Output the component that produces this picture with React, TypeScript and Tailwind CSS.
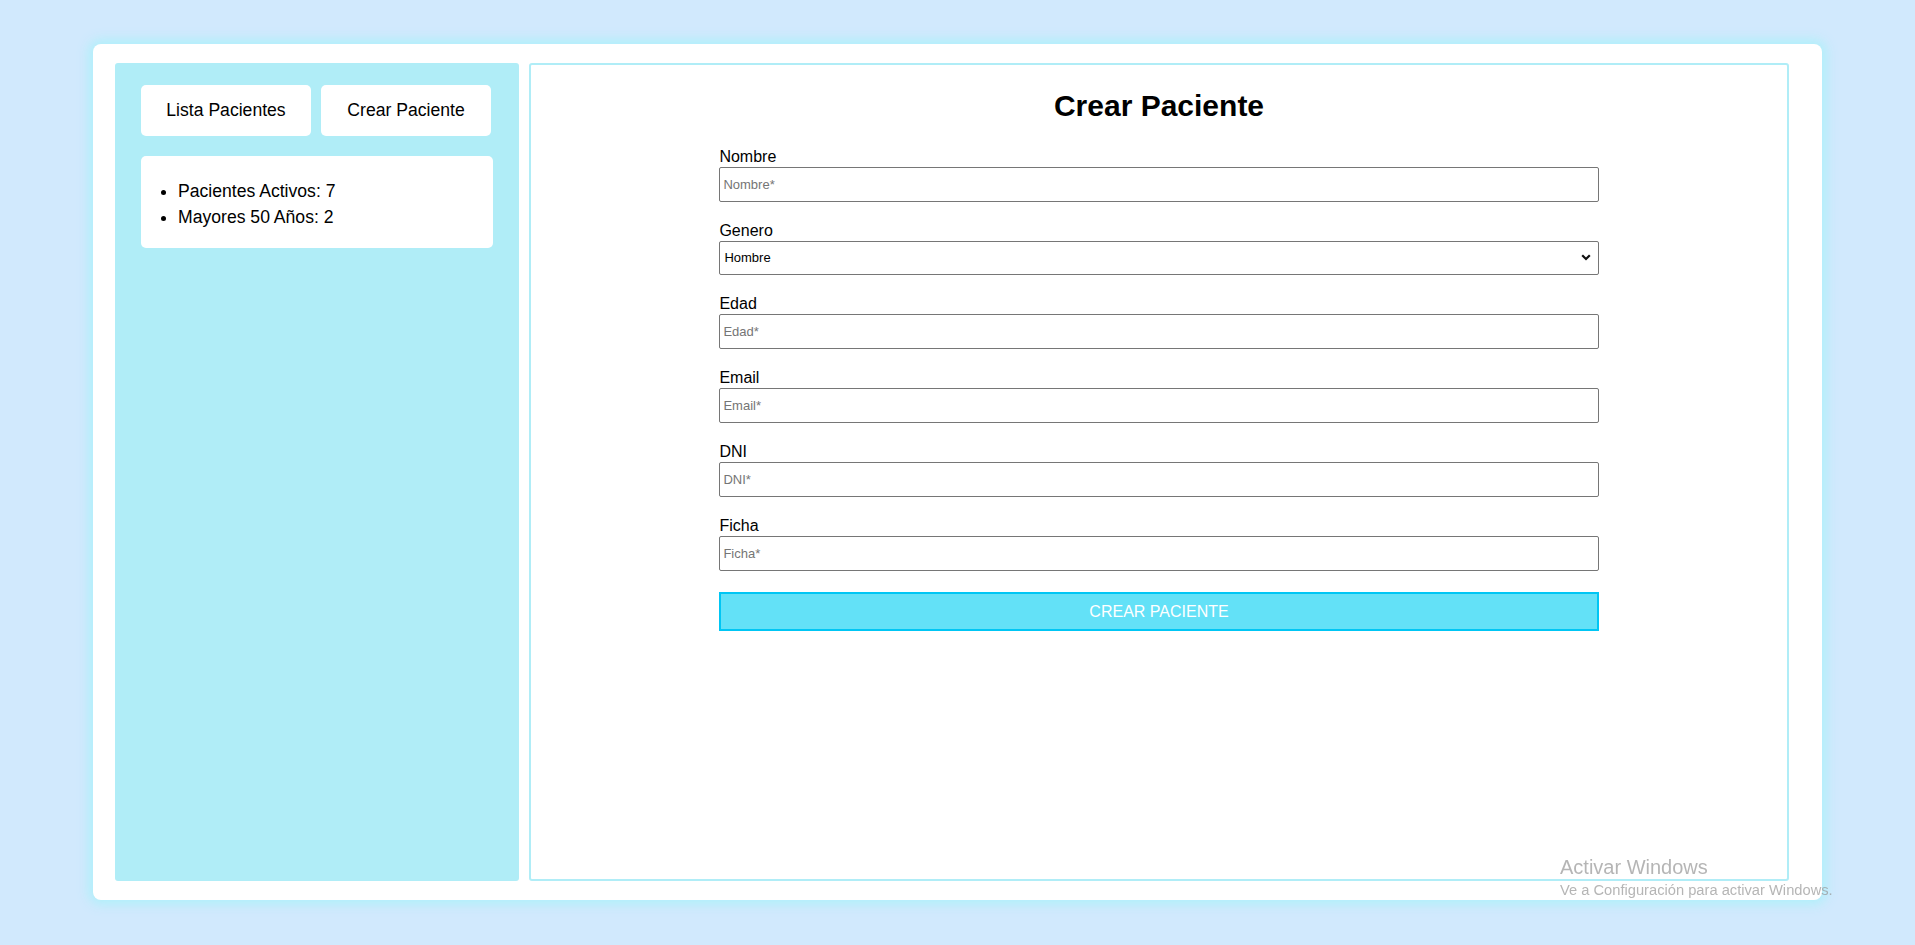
import React from "react";

const fields = [
  { label: "Nombre", placeholder: "Nombre*" },
  { label: "Genero", select: true },
  { label: "Edad", placeholder: "Edad*" },
  { label: "Email", placeholder: "Email*" },
  { label: "DNI", placeholder: "DNI*" },
  { label: "Ficha", placeholder: "Ficha*" },
];

const Sidebar = () => {
  return (
    <div className="w-[404px] shrink-0 bg-[#b0edf7] rounded-[3px] px-[26px] pt-[22px]">
      <div className="flex gap-[10px]">
        <button className="w-[170px] h-[51px] bg-white rounded-[5px] text-[17.6px] text-black">
          Lista Pacientes
        </button>
        <button className="w-[170px] h-[51px] bg-white rounded-[5px] text-[17.6px] text-black">
          Crear Paciente
        </button>
      </div>
      <div className="mt-[20px] w-[352px] bg-white rounded-[5px] pt-[22px] pb-[18px]">
        <ul className="list-disc pl-[37px] text-[17.6px] leading-[26px] text-black">
          <li>Pacientes Activos: 7</li>
          <li>Mayores 50 Años: 2</li>
        </ul>
      </div>
    </div>
  );
};

const CrearPaciente = () => {
  return (
    <div className="flex-1 border-2 border-[#b0edf7] rounded-[3px] bg-white pt-[24px]">
      <h2 className="text-[30px] leading-[34px] font-bold text-center text-black mb-[24px]">
        Crear Paciente
      </h2>
      <form className="w-[70%] mx-auto" onSubmit={(e) => e.preventDefault()}>
        {fields.map((f) => (
          <div key={f.label} className="mb-[19px]">
            <label className="block text-[16px] leading-[20px] text-black">{f.label}</label>
            {f.select ? (
              <div className="relative">
                <select className="appearance-none w-full h-[34px] border border-[#767676] rounded-[2px] bg-white pl-[4px] text-[13px] text-black outline-none">
                  <option>Hombre</option>
                  <option>Mujer</option>
                </select>
                <svg
                  className="absolute right-[8px] top-[13px] pointer-events-none"
                  width="10"
                  height="7"
                  viewBox="0 0 10 7"
                >
                  <path d="M1.2 1.2 L5 5 L8.8 1.2" fill="none" stroke="#111" strokeWidth="2.2" />
                </svg>
              </div>
            ) : (
              <input
                placeholder={f.placeholder}
                className="block w-full h-[35px] border border-[#767676] rounded-[2px] px-[3px] text-[13px] text-black placeholder:text-[#757575] outline-none"
              />
            )}
          </div>
        ))}
        <button
          type="submit"
          className="mt-[2px] w-full h-[39px] bg-[#63e1f7] border-2 border-[#00c6f4] text-white text-[16px]"
        >
          CREAR PACIENTE
        </button>
      </form>
    </div>
  );
};

export default function App() {
  return (
    <div
      className="min-h-screen bg-[#d1e9fd] pt-[44px]"
      style={{ fontFamily: '"Liberation Sans", Arial, sans-serif' }}
    >
      <div className="w-[1729px] h-[856px] mx-auto bg-white rounded-[8px] shadow-[0_0_12px_4px_rgba(172,240,250,0.95)] flex gap-[10px] pl-[22px] pr-[33px] py-[19px]">
        <Sidebar />
        <CrearPaciente />
      </div>
      <div className="fixed left-[1560px] top-[855px] text-[rgba(150,150,150,0.7)] pointer-events-none">
        <div className="text-[20px] leading-[24px]">Activar Windows</div>
        <div className="text-[14.7px] leading-[18px] mt-[2px]">
          Ve a Configuración para activar Windows.
        </div>
      </div>
    </div>
  );
}
